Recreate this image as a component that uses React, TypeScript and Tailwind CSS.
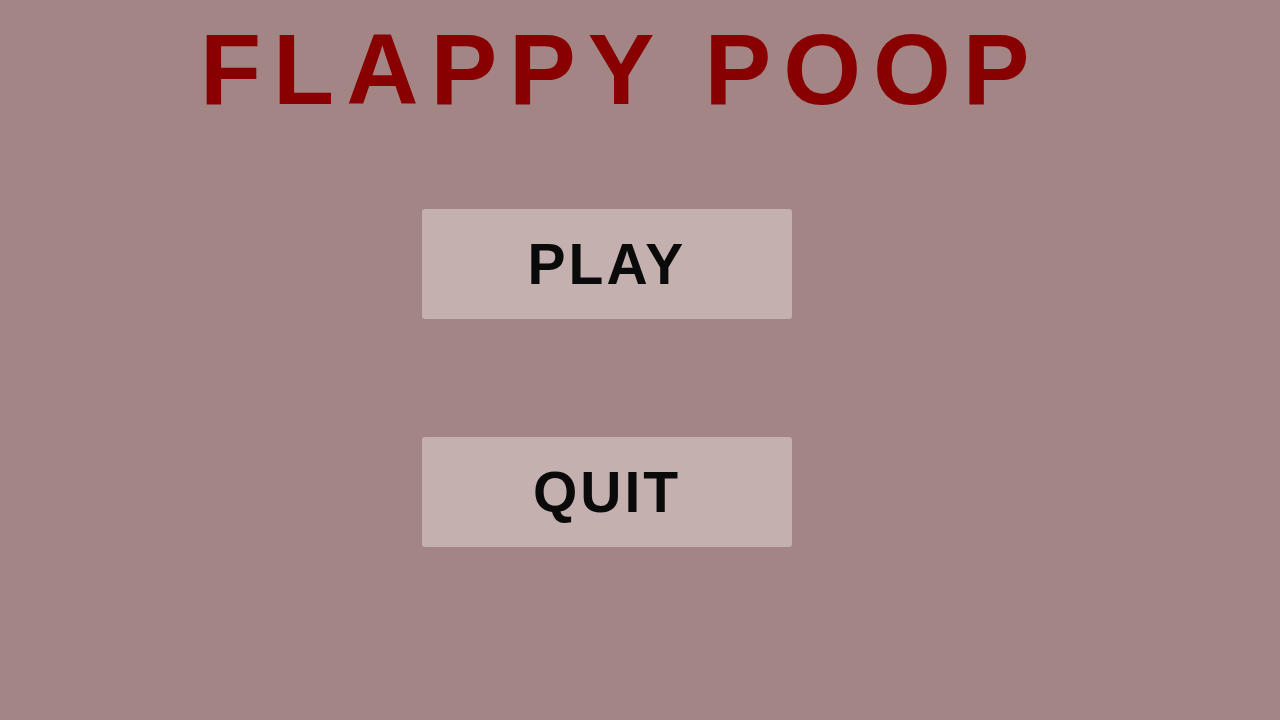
export default function App() {
  return (
    <div
      className="w-[1280px] h-[720px] bg-[#a38586] flex flex-col overflow-hidden"
      style={{ fontFamily: '"Liberation Sans", Arial, sans-serif' }}
    >
      <h1 className="ml-[200px] mt-[19px] h-[100px] leading-none text-[100px] font-bold tracking-[12px] text-[#880000] whitespace-nowrap">
        FLAPPY POOP
      </h1>
      <div className="ml-[422px] mt-[90px] flex flex-col gap-[118px]">
        <button className="w-[370px] h-[110px] rounded-[3px] bg-[#c4b0af] text-[57px] font-bold tracking-[3px] text-[#0a0a0a] flex items-center justify-center pt-[2px]">
          PLAY
        </button>
        <button className="w-[370px] h-[110px] rounded-[3px] bg-[#c4b0af] text-[57px] font-bold tracking-[3px] text-[#0a0a0a] flex items-center justify-center pt-[2px]">
          QUIT
        </button>
      </div>
    </div>
  );
}
